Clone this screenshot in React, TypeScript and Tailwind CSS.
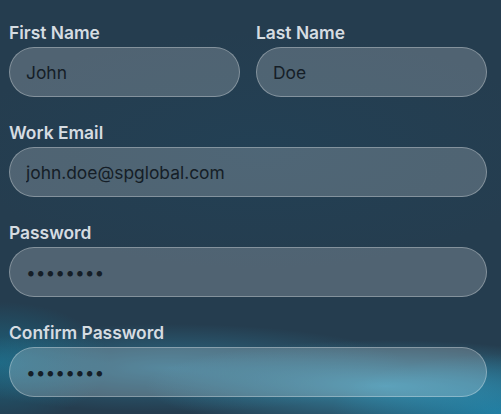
import React from "react";

function Field({ label, value, type = "text" }: { label: string; value: string; type?: string }) {
  return (
    <div className="flex flex-col">
      <label className="h-[24px] leading-[24px] text-[17.4px] font-semibold text-[#d6dce1] mb-[2px]">{label}</label>
      <input
        type={type}
        value={value}
        readOnly
        className="h-[50px] w-full rounded-full border border-white/30 bg-white/20 pl-4 pr-4 text-[17.4px] text-[#151e27] outline-none"
        style={{ fontFamily: "Inter, 'Noto Sans', sans-serif" }}
      />
    </div>
  );
}

export default function App() {
  return (
    <div
      className="w-[501px] h-[414px] overflow-hidden bg-[#253d4f] bg-[radial-gradient(ellipse_240px_46px_at_385px_386px,rgba(60,165,200,0.72),transparent),radial-gradient(ellipse_240px_44px_at_170px_368px,rgba(50,145,180,0.55),transparent),radial-gradient(ellipse_110px_60px_at_0px_362px,rgba(25,115,145,0.7),transparent),radial-gradient(ellipse_170px_60px_at_501px_414px,rgba(25,130,170,0.85),transparent),radial-gradient(ellipse_300px_120px_at_260px_150px,rgba(30,70,95,0.35),transparent)]"
      style={{ fontFamily: "Inter, 'Noto Sans', sans-serif" }}
    >
      <div className="px-[9px] pt-[21px] pr-[14px] flex flex-col gap-[24px]">
        <div className="grid grid-cols-2 gap-[16px]">
          <Field label="First Name" value="John" />
          <Field label="Last Name" value="Doe" />
        </div>
        <Field label="Work Email" value="john.doe@spglobal.com" />
        <Field label="Password" value="password" type="password" />
        <Field label="Confirm Password" value="password" type="password" />
      </div>
    </div>
  );
}
